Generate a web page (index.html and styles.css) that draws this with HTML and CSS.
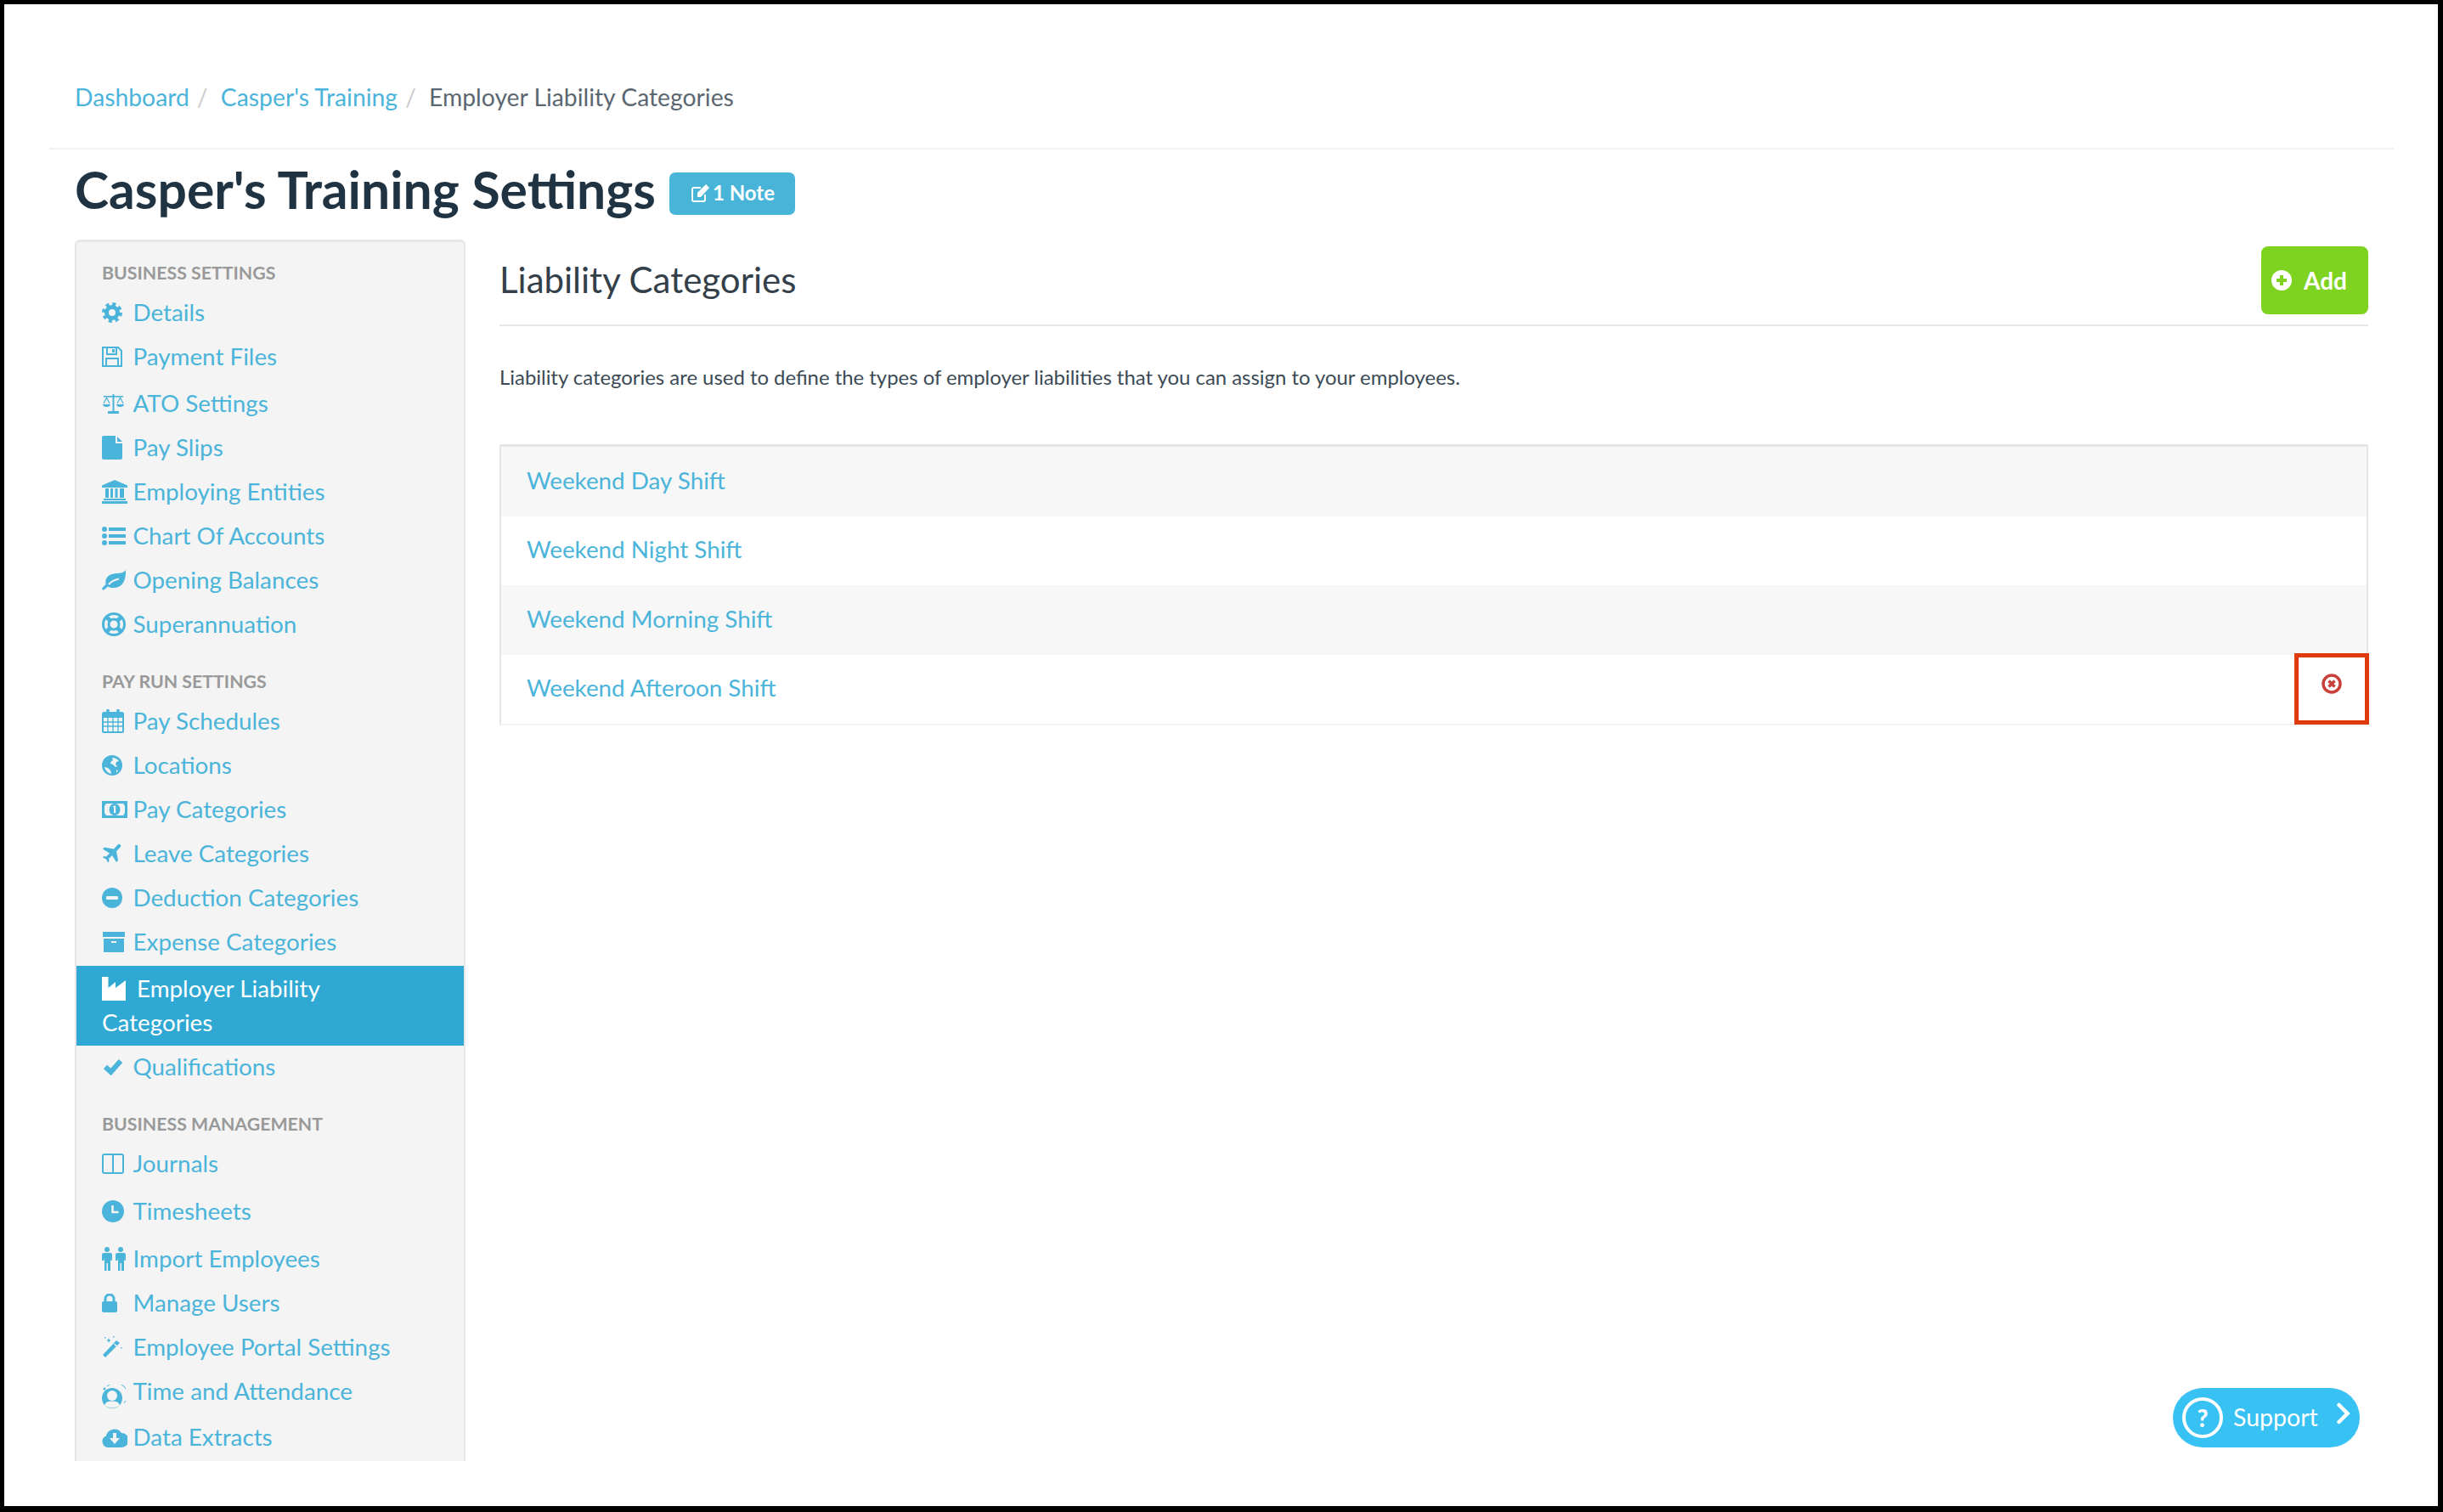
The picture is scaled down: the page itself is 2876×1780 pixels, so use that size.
FILE: index.html
```html
<!DOCTYPE html>
<html lang="en-us">

<head>
  <meta http-equiv="Content-Type" content="text/html; charset=UTF-8">
  <title>Employer Liability Categories</title>
  <link rel="stylesheet" href="styles.css">
</head>

<body>
  <div class="frame">
    <div class="crumbs">
      <a href="#">Dashboard</a><span class="crumb-sep">/</span>
      <a href="#">Casper's Training</a><span class="crumb-sep">/</span>
      <span class="crumb-current">Employer Liability Categories</span>
    </div>

    <div class="title-row">
      <h1>Casper's Training Settings</h1>
      <a class="note-btn" href="#">
        <svg width="24" height="24" viewBox="0 0 24 24" fill="none" stroke="currentColor"><path d="M18 14v6a2 2 0 0 1-2 2H5a2 2 0 0 1-2-2V8a2 2 0 0 1 2-2h8" stroke-width="2"/><path d="M9 17v-5L19 2l4 4-10 11z" fill="currentColor" stroke="none"/></svg>
        1 Note
      </a>
    </div>

    <div class="content">
      <div class="sidebar">
        <div class="nav-heading">BUSINESS SETTINGS</div>
        <a class="nav-item" href="#"><span class="nav-icon"><svg width="24" height="24" viewBox="0 0 24 24" fill="none" stroke="currentColor"><circle cx="12" cy="12" r="6.5" stroke-width="5"/><circle cx="12" cy="12" r="10" stroke-width="4" stroke-dasharray="4 3.85"/></svg></span>Details</a>
        <a class="nav-item" href="#"><span class="nav-icon"><svg width="24" height="24" viewBox="0 0 24 24" fill="none" stroke="currentColor" stroke-width="2"><path d="M1 1h18l4 4v18H1z"/><path d="M6 1v8h11V1"/><path d="M5 23v-9h14v9"/><path d="M12 3h3v4h-3z" fill="currentColor" stroke="none"/></svg></span>Payment Files</a>
        <a class="nav-item nudge-3" href="#"><span class="nav-icon"><svg width="27" height="26" viewBox="0 0 27 26" fill="currentColor"><rect x="12.5" y="2" width="2" height="20"/><rect x="7" y="22" width="13" height="3"/><rect x="2" y="4" width="23" height="1.6"/><path d="M1 14h9a4.5 3 0 0 1-9 0zM17 14h9a4.5 3 0 0 1-9 0z"/><path d="M5.500 6L2 13M5.500 6L9 13M21.500 6L18 13M21.500 6L25 13" stroke="currentColor" fill="none" stroke-width="1.200"/></svg></span>ATO Settings</a>
        <a class="nav-item" href="#"><span class="nav-icon"><svg width="24" height="28" viewBox="0 0 24 28" fill="currentColor"><path d="M0 2a2 2 0 0 1 2-2h14v9h8v17a2 2 0 0 1-2 2H2a2 2 0 0 1-2-2z"/><path d="M18 1l6 6h-6z"/></svg></span>Pay Slips</a>
        <a class="nav-item" href="#"><span class="nav-icon"><svg width="30" height="28" viewBox="0 0 30 28" fill="currentColor"><path d="M15 0l15 6.500V9H0V6.500z"/><path d="M4 10h4v11H4zM10 10h3v11h-3zM15.500 10h3v11h-3zM21 10h5v11h-5z"/><path d="M2 22h26v2H2zM0 25h30v3H0z"/></svg></span>Employing Entities</a>
        <a class="nav-item" href="#"><span class="nav-icon"><svg width="28" height="22" viewBox="0 0 28 22" fill="currentColor"><circle cx="3" cy="3" r="3"/><circle cx="3" cy="11" r="3"/><circle cx="3" cy="19" r="3"/><path d="M8 1h20v4H8zM8 9h20v4H8zM8 17h20v4H8z"/></svg></span>Chart Of Accounts</a>
        <a class="nav-item" href="#"><span class="nav-icon"><svg width="28" height="24" viewBox="0 0 28 24" fill="currentColor"><path d="M28 0c.5 11-3 20-13 21-4 .3-6.500-.5-8-1.500L3 23c-1.500 1.200-3.500-.3-2.500-2l4-4C3 8 10 4 17 4c5 0 9-1 11-4z"/><path d="M8 17c3-3.500 7-5.500 12-6.500" fill="none" stroke="#f4f4f4" stroke-width="2"/></svg></span>Opening Balances</a>
        <a class="nav-item" href="#"><span class="nav-icon"><svg width="28" height="28" viewBox="0 0 28 28" fill="none" stroke="currentColor"><circle cx="14" cy="14" r="12.500" stroke-width="3"/><circle cx="14" cy="14" r="6" stroke-width="3"/><path d="M5 5l5 5M23 5l-5 5M5 23l5-5M23 23l-5-5" stroke-width="5"/></svg></span>Superannuation</a>

        <div class="nav-heading nav-heading-next">PAY RUN SETTINGS</div>
        <a class="nav-item" href="#"><span class="nav-icon"><svg width="26" height="28" viewBox="0 0 26 28" fill="none" stroke="currentColor"><rect x="1" y="4" width="24" height="23" rx="1.500" stroke-width="2"/><path d="M1 5h24v5H1z" fill="currentColor" stroke="none"/><path d="M7 10v17M13 10v17M19 10v17M1 15h24M1 20h24" stroke-width="1.300"/><path d="M7 1v6M19 1v6" stroke-width="3.500" stroke-linecap="round"/></svg></span>Pay Schedules</a>
        <a class="nav-item" href="#"><span class="nav-icon"><svg width="24" height="24" viewBox="0 0 24 24" fill="currentColor"><circle cx="12" cy="12" r="12"/><path d="M12 3c3 0 6 1.500 8 4l-3 1-1 3 2 2-2 1-3-3-3-1 1-3 2-1zM3 14l4 1 3 3 1 4c-4-1-7-4-8-8zM17 17l2 1-2 3z" fill="#f4f4f4"/></svg></span>Locations</a>
        <a class="nav-item" href="#"><span class="nav-icon"><svg width="30" height="20" viewBox="0 0 30 20" fill="currentColor"><path d="M0 0h30v20H0z"/><path d="M5 3h20l2 3v8l-2 3H5l-2-3V6z" fill="#f4f4f4"/><ellipse cx="15" cy="10" rx="6.500" ry="7"/><path d="M14 5.500h2.200V14H14zM12.500 7l2-1.500v2z" fill="#f4f4f4"/></svg></span>Pay Categories</a>
        <a class="nav-item" href="#"><span class="nav-icon"><svg width="23" height="23" viewBox="0 0 23 23" fill="currentColor"><path d="M19 1c2-1 4 1 3 3l-5 5 2 11-2 2-5-8-4 4 .5 3-1.500 1.500-2-4-4-2L2 15l3 .5 4-4-8-5 2-2 11 2z"/></svg></span>Leave Categories</a>
        <a class="nav-item" href="#"><span class="nav-icon"><svg width="24" height="24" viewBox="0 0 24 24" fill="currentColor"><circle cx="12" cy="12" r="12"/><rect x="5" y="10" width="14" height="4" rx="1" fill="#f4f4f4"/></svg></span>Deduction Categories</a>
        <a class="nav-item" href="#"><span class="nav-icon"><svg width="27" height="24" viewBox="0 0 27 24" fill="currentColor"><path d="M1 0h26v6H1zM2 8h24v16H2z"/><rect x="11" y="11" width="6" height="2" fill="#f4f4f4"/></svg></span>Expense Categories</a>
        <a class="nav-item nav-active" href="#"><span class="nav-icon"><svg width="28" height="28" viewBox="0 0 28 28" fill="currentColor"><path d="M0 0h7.500v13L16 6v7l12-9v24H0z"/></svg></span>Employer Liability Categories</a>
        <a class="nav-item" href="#"><span class="nav-icon"><svg width="26" height="20" viewBox="0 0 26 20" fill="none" stroke="currentColor"><path d="M4 10l6.500 6L22 3" stroke-width="6"/></svg></span>Qualifications</a>

        <div class="nav-heading nav-heading-next">BUSINESS MANAGEMENT</div>
        <a class="nav-item" href="#"><span class="nav-icon"><svg width="26" height="24" viewBox="0 0 26 24" fill="none" stroke="currentColor" stroke-width="2"><rect x="1" y="1" width="24" height="22" rx="2"/><path d="M13 1v22"/></svg></span>Journals</a>
        <a class="nav-item nudge-4" href="#"><span class="nav-icon"><svg width="26" height="26" viewBox="0 0 26 26" fill="currentColor"><circle cx="13" cy="13" r="13"/><path d="M12.500 6v8h7" fill="none" stroke="#f4f4f4" stroke-width="2.500"/></svg></span>Timesheets</a>
        <a class="nav-item nudge-4" href="#"><span class="nav-icon"><svg width="28" height="28" viewBox="0 0 28 28" fill="currentColor"><circle cx="6" cy="3" r="3"/><circle cx="22" cy="3" r="3"/><path d="M2 7h8a2 2 0 0 1 2 2v7h-1.500l-.5-3v15H7v-9H5.500v9H3V13l-.5 3H0V9a2 2 0 0 1 2-2zM18 7h8a2 2 0 0 1 2 2v7h-1.500l-.5-3v15h-3v-9h-1.500v9H19V13l-.5 3H16V9a2 2 0 0 1 2-2z"/></svg></span>Import Employees</a>
        <a class="nav-item" href="#"><span class="nav-icon"><svg width="18" height="22" viewBox="0 0 18 22" fill="currentColor"><path d="M0 11a2 2 0 0 1 2-2h14a2 2 0 0 1 2 2v9a2 2 0 0 1-2 2H2a2 2 0 0 1-2-2z"/><path d="M4 10V6a5 5 0 0 1 10 0v4" fill="none" stroke="currentColor" stroke-width="3"/></svg></span>Manage Users</a>
        <a class="nav-item" href="#"><span class="nav-icon"><svg width="25" height="25" viewBox="0 0 25 25" fill="currentColor"><path d="M1 22L17 5l4 3L4 25z"/><path d="M14.500 9l3 3" stroke="#f4f4f4" stroke-width="1.200"/><path d="M8 2l.8 2.200L11 5l-2.200.8L8 8l-.8-2.200L5 5l2.200-.8zM3 1h1.500v1.500H3zM13 0h1.500v1.500H13zM22 13h1.500v1.500H22z"/></svg></span>Employee Portal Settings</a>
        <a class="nav-item" href="#"><span class="nav-icon nudge-icon"><svg width="28" height="28" viewBox="0 0 28 28" fill="currentColor"><circle cx="12" cy="16" r="12"/><circle cx="12" cy="13" r="6" fill="#f4f4f4"/><path d="M3 24c2-4 5-4.500 9-4.500s7 .5 9 4.500c-2 2-5 3.500-9 3.500s-7-1.500-9-3.500z" fill="#f4f4f4"/><path d="M6 2a14 14 0 0 1 20 20" fill="none" stroke="currentColor" stroke-width="1"/><circle cx="3" cy="5" r="1.500"/></svg></span>Time and Attendance</a>
        <a class="nav-item nudge-2" href="#"><span class="nav-icon"><svg width="30" height="24" viewBox="0 0 30 24" fill="currentColor"><path d="M7 24A7 7 0 0 1 5 10.500 10 10 0 0 1 23 7a8.500 8.500 0 0 1 0 17z"/><path d="M13 7h4v6h4l-6 7-6-7h4z" fill="#f4f4f4"/></svg></span>Data Extracts</a>
      </div>

      <div class="main">
        <div class="main-head">
          <h2>Liability Categories</h2>
          <a class="add-btn" href="#">
            <svg width="24" height="24" viewBox="0 0 24 24"><circle cx="12" cy="12" r="12" fill="currentColor"/><path d="M12 6v12M6 12h12" stroke="#7ed321" stroke-width="4"/></svg>
            Add
          </a>
        </div>
        <p class="intro">Liability categories are used to define the types of employer liabilities that you can assign to your employees.</p>

        <div class="cat-list">
          <div class="cat-row"><a href="#">Weekend Day Shift</a></div>
          <div class="cat-row"><a href="#">Weekend Night Shift</a></div>
          <div class="cat-row"><a href="#">Weekend Morning Shift</a></div>
          <div class="cat-row">
            <a href="#">Weekend Afteroon Shift</a>
            <div class="remove-box">
              <svg width="24" height="24" viewBox="0 0 24 24" fill="none" stroke="#c9403a"><circle cx="12" cy="12" r="10" stroke-width="3.500"/><path d="M8.500 8.500l7 7M15.500 8.500l-7 7" stroke-width="3.500"/></svg>
            </div>
          </div>
        </div>
      </div>
    </div>

    <a class="support" href="#">
      <span class="support-q">?</span>
      <span class="support-label">Support</span>
      <svg class="support-arrow" width="16" height="26" viewBox="0 0 16 26" fill="none" stroke="currentColor"><path d="M2.500 3l10 10-10 10" stroke-width="4.500" stroke-linecap="round"/></svg>
    </a>
  </div>
</body>

</html>
```

FILE: styles.css
```css
* {
  box-sizing: border-box;
}

body {
  margin: 0;
  background: #000;
  font-family: Lato, "Open Sans", Arial, sans-serif;
  color: #3b4a55;
}

a {
  color: #4bb4da;
  text-decoration: none;
}

.frame {
  position: relative;
  width: 2876px;
  height: 1780px;
  background: #fff;
  border-style: solid;
  border-color: #000;
  border-width: 5px 6px 7px 5px;
  overflow: hidden;
}

.crumbs {
  margin: 0 52px 0 53px;
  padding: 89px 30px 40px;
  border-bottom: 2px solid #f2f2f2;
  font-size: 28.3px;
  line-height: 40px;
}

.crumb-sep {
  margin: 0 8px 0 9px;
  color: #ccc;
}

.crumb-current {
  color: #5b6770;
}

.title-row {
  display: flex;
  align-items: center;
  height: 72px;
  margin: 16px 0 18px 83px;
}

h1 {
  margin: -11px 16px 0 0;
  font-size: 60.6px;
  font-weight: 700;
  line-height: 72px;
  color: #1f3342;
}

.note-btn {
  display: flex;
  align-items: center;
  gap: 3px;
  width: 148px;
  height: 50px;
  padding: 0 0 3px 24px;
  background: #47b4d8;
  border-radius: 7px;
  color: #fff;
  font-size: 24px;
  font-weight: 700;
}

.content {
  display: flex;
  gap: 40px;
  margin-left: 83px;
}

.sidebar {
  width: 460px;
  height: 1438px;
  padding-top: 21px;
  background: #f4f4f4;
  border: 2px solid #e6e6e6;
  border-top-width: 3px;
  border-bottom: 0;
  border-radius: 6px 6px 0 0;
  overflow: hidden;
}

.nav-heading {
  padding-left: 30px;
  margin-bottom: 7px;
  color: #999;
  font-size: 21.3px;
  font-weight: 700;
  line-height: 30px;
}

.nav-heading-next {
  margin-top: 25px;
}

.nav-item {
  display: block;
  height: 52px;
  padding: 5px 20px 0 30px;
  font-size: 27.8px;
  line-height: 40px;
}

.nav-icon {
  display: inline-block;
  width: 36.500px;
  margin-bottom: 6px;
  vertical-align: middle;
  line-height: 0;
}

.nudge-2 {
  margin-top: 2px;
}

.nudge-3 {
  margin-top: 3px;
}

.nudge-4 {
  margin-top: 4px;
}

.nudge-icon {
  margin-top: 6px;
  margin-bottom: 0;
}

.nav-active {
  height: 94px;
  margin-top: 1px;
  padding-top: 7px;
  padding-right: 100px;
  background: #2fa9d4;
  color: #fff;
}

.nav-active .nav-icon {
  width: 41px;
}

.main {
  width: 2200px;
  padding-top: 8px;
}

.main-head {
  display: flex;
  justify-content: space-between;
  align-items: center;
  padding-bottom: 12px;
  border-bottom: 2px solid #e8e8e8;
}

h2 {
  margin: -3px 0 0;
  font-size: 42px;
  font-weight: 400;
  color: #33404a;
}

.add-btn {
  display: flex;
  align-items: center;
  gap: 14px;
  width: 126px;
  height: 80px;
  padding: 0 0 1px 12px;
  background: #7ed321;
  border-radius: 8px;
  color: #fff;
  font-size: 28px;
  font-weight: 700;
}

.intro {
  margin: 44px 0 63px;
  font-size: 23.9px;
  line-height: 32px;
}

.cat-list {
  border: 2px solid #e5e5e5;
  border-top-width: 3px;
  border-bottom-color: #f2f2f2;
}

.cat-row {
  display: flex;
  justify-content: space-between;
  align-items: center;
  height: 81.5px;
  padding-left: 30px;
  font-size: 27.8px;
}

.cat-row a {
  margin-top: -3px;
}

.cat-row:nth-child(odd) {
  background: #f7f7f7;
}

.remove-box {
  display: flex;
  justify-content: center;
  padding-top: 19px;
  width: 88px;
  height: 84px;
  margin-right: -3px;
  border: 5px solid #e03a0a;
}

.support {
  position: absolute;
  left: 2553px;
  top: 1629px;
  display: flex;
  align-items: center;
  width: 220px;
  height: 70px;
  padding-left: 11px;
  background: #38c1f3;
  border-radius: 35px;
  color: #fff;
}

.support-q {
  width: 48px;
  height: 48px;
  border: 4px solid #fff;
  border-radius: 50%;
  font-size: 28px;
  font-weight: 900;
  line-height: 40px;
  text-align: center;
}

.support-label {
  margin-left: 12px;
  margin-top: -2px;
  font-size: 28.5px;
}

.support-arrow {
  margin: -10px 0 0 22px;
}
```
